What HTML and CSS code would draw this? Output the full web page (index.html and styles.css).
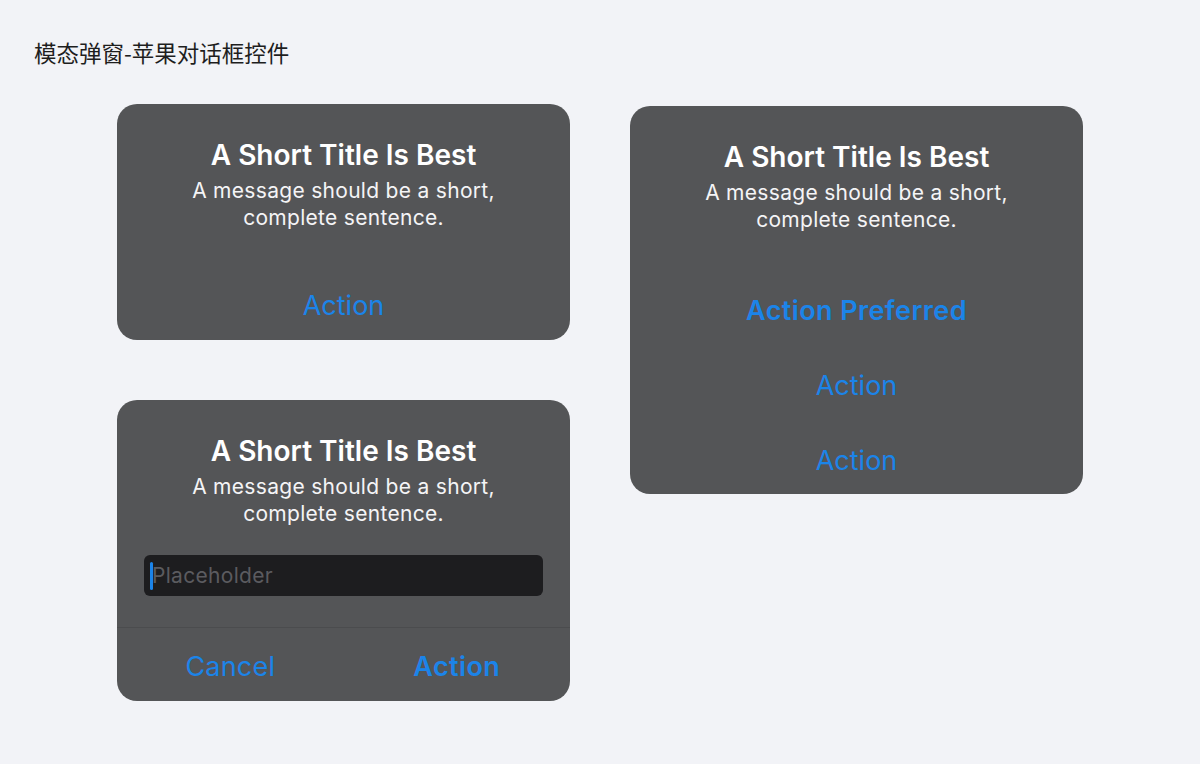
FILE: index.html
```html
<!DOCTYPE html>
<html lang="zh">
<head>
<meta charset="utf-8">
<title>模态弹窗-苹果对话框控件</title>
<link rel="stylesheet" href="styles.css">
</head>
<body>
<header class="page-title">模态弹窗-苹果对话框控件</header>
<main class="board">
  <div class="col">
    <section class="alert alert-single">
      <h2 class="alert-title">A Short Title Is Best</h2>
      <p class="alert-msg">A message should be a short,<br>complete sentence.</p>
      <div class="single-action">Action</div>
    </section>
    <section class="alert alert-input">
      <h2 class="alert-title">A Short Title Is Best</h2>
      <p class="alert-msg">A message should be a short,<br>complete sentence.</p>
      <div class="field"><span class="caret"></span><span class="placeholder">Placeholder</span></div>
      <div class="pair">
        <div class="pair-btn">Cancel</div>
        <div class="pair-btn bold">Action</div>
      </div>
    </section>
  </div>
  <div class="col">
    <section class="alert alert-stack">
      <h2 class="alert-title">A Short Title Is Best</h2>
      <p class="alert-msg">A message should be a short,<br>complete sentence.</p>
      <div class="stack">
        <div class="stack-btn bold">Action Preferred</div>
        <div class="stack-btn">Action</div>
        <div class="stack-btn">Action</div>
      </div>
    </section>
  </div>
</main>
</body>
</html>
```

FILE: styles.css
```css
html, body {
  margin: 0;
  padding: 0;
  background: #f2f3f7;
}
body {
  width: 1200px;
  height: 764px;
  overflow: hidden;
  font-family: Inter, "Noto Sans", "Noto Sans CJK SC", sans-serif;
}
.page-title {
  padding: 40px 0 0 34px;
  height: 24px;
  line-height: 24px;
  font-size: 22.5px;
  color: #1e1e1e;
  font-family: "Noto Sans CJK SC", sans-serif;
}
.board {
  margin-top: 40px;
  padding-left: 117px;
  display: grid;
  grid-template-columns: 453px 453px;
  column-gap: 60px;
  align-items: start;
}
.col {
  display: flex;
  flex-direction: column;
  gap: 60px;
}
.alert {
  background: #545557;
  border-radius: 20px;
  padding-top: 34px;
  text-align: center;
  color: #ffffff;
  overflow: hidden;
}
.alert-stack {
  margin-top: 2px;
}
.alert-title {
  margin: 0;
  font-size: 28px;
  line-height: 34px;
  font-weight: 600;
  letter-spacing: 0;
}
.alert-msg {
  margin: 5px 0 0;
  font-size: 21px;
  line-height: 27px;
  font-weight: 400;
  letter-spacing: 0.3px;
  color: #f4f4f6;
}
.single-action {
  margin-top: 39px;
  height: 70px;
  line-height: 72px;
  font-size: 27px;
  color: #1b84e9;
}
.field {
  margin: 28px 27px 0;
  height: 41px;
  background: #1d1d1f;
  border-radius: 6px;
  display: flex;
  align-items: center;
  padding-left: 6px;
  text-align: left;
}
.caret {
  width: 3px;
  height: 28px;
  border-radius: 2px;
  background: #1b84e9;
  margin-right: -1px;
}
.placeholder {
  font-size: 21px;
  letter-spacing: 0.3px;
  color: #5b5b5f;
}
.pair {
  margin-top: 31px;
  border-top: 1px solid #4b4c4e;
  display: grid;
  grid-template-columns: 1fr 1fr;
  height: 73px;
}
.pair-btn {
  line-height: 78px;
  font-size: 27px;
  letter-spacing: 0.2px;
  color: #1b84e9;
}
.bold {
  font-weight: 600;
  letter-spacing: 0.4px;
}
.stack {
  margin-top: 39px;
  display: flex;
  flex-direction: column;
}
.stack-btn {
  height: 75px;
  line-height: 77px;
  font-size: 27px;
  color: #1b84e9;
}
.stack-btn:last-child {
  height: 72px;
}
```
